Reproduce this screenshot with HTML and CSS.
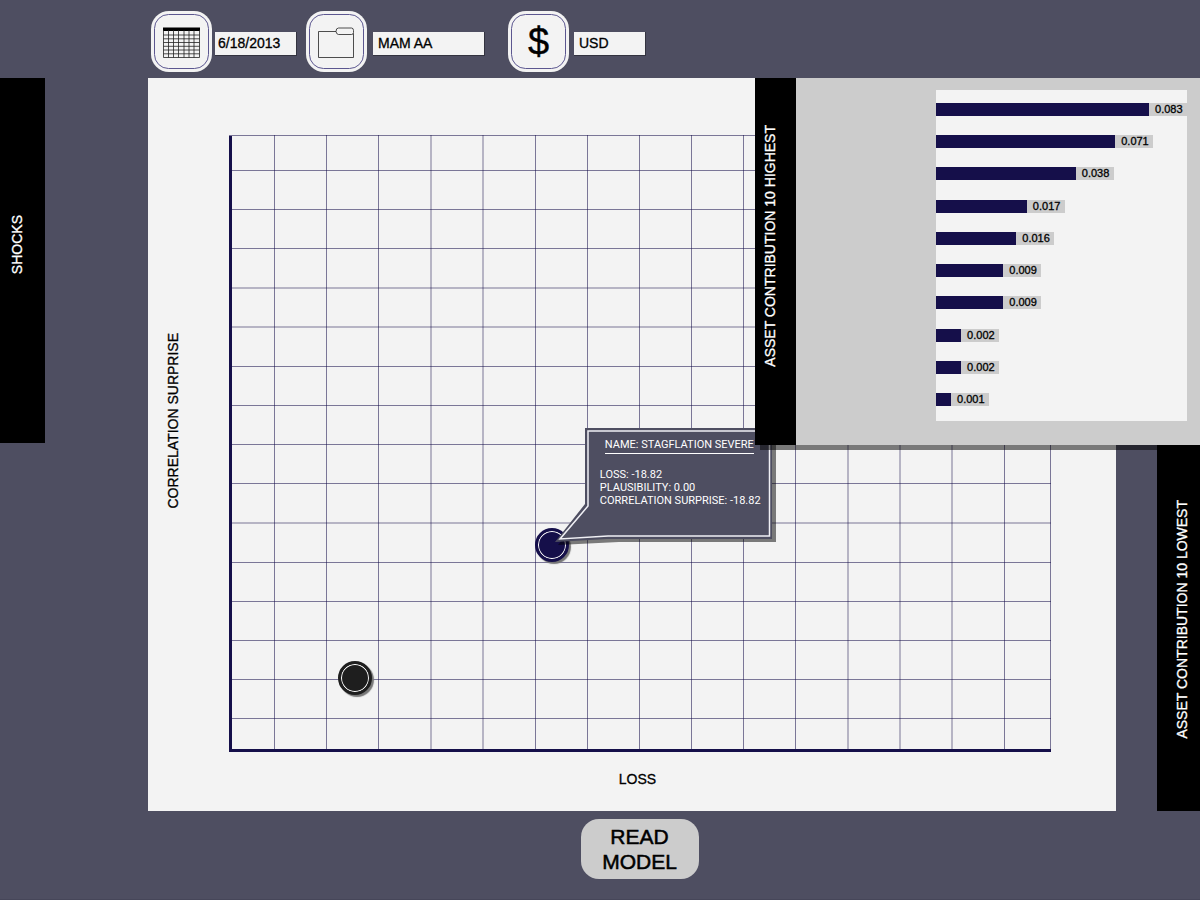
FILE: index.html
```html
<!DOCTYPE html>
<html lang="en">
<head>
<meta charset="utf-8">
<meta name="viewport" content="width=device-width, initial-scale=1">
<title>Scenario model</title>
<link rel="stylesheet" href="styles.css">
</head>
<body>
<header class="toolbar">
  <div class="field">
    <button class="icon-button" type="button" aria-label="Choose date">
      <svg viewBox="0 0 61 61" aria-hidden="true">
        <rect class="outline" x="3.5" y="3.5" width="54" height="54" rx="14"/>
        <path d="M12 16.500h37v3.500h-37z"/>
        <path class="thin" d="M12.500 19v27.500M17.500 19v27.500M22.500 19v27.500M27.500 19v27.500M33 19v27.500M38 19v27.500M43 19v27.500M48.500 19v27.500M12.500 24h36M12.500 27.800h36M12.500 31.500h36M12.500 35.300h36M12.500 39h36M12.500 42.800h36M12.500 46.500h36"/>
      </svg>
    </button>
    <input class="value value-date" type="text" aria-label="Date" value="6/18/2013">
  </div>
  <div class="field field-portfolio">
    <button class="icon-button" type="button" aria-label="Choose portfolio">
      <svg viewBox="0 0 61 61" aria-hidden="true">
        <rect class="outline" x="3.500" y="3.500" width="54" height="54" rx="14"/>
        <path class="thin" d="M30 20.500H12.500V46.500H47.500V22.500M32.500 17H45.500Q47.500 17 47.500 19.500V21.500Q47.500 23.500 45.500 23.500H32.500Q30.500 23.500 30 20.500Q30 17 32.500 17Z"/>
      </svg>
    </button>
    <input class="value value-portfolio" type="text" aria-label="Portfolio" value="MAM AA">
  </div>
  <div class="field field-currency">
    <button class="icon-button" type="button" aria-label="Choose currency">
      <svg viewBox="0 0 61 61" aria-hidden="true">
        <rect class="outline" x="3.500" y="3.500" width="54" height="54" rx="14"/>
        <text class="dollar" x="30.500" y="44" text-anchor="middle">$</text>
      </svg>
    </button>
    <input class="value value-currency" type="text" aria-label="Currency" value="USD">
  </div>
</header>

<main class="workspace">
  <button class="side-tab tab-shocks" type="button"><span class="vertical">SHOCKS</span></button>

  <section class="chart" aria-label="Correlation surprise by loss">
    <div class="axis-y"><span class="vertical">CORRELATION SURPRISE</span></div>
    <div class="plot">
      <svg class="grid" viewBox="0 0 822 616" aria-hidden="true">
        <path class="grid-lines" d="M45.500 0V616M97.500 0V616M149.500 0V616M202 0V616M254 0V616M306.500 0V616M358.500 0V616M410.500 0V616M462.500 0V616M514.500 0V616M566.500 0V616M619 0V616M671 0V616M723 0V616M775.500 0V616M821.500 0V616M0 .5H822M0 35.500H822M0 74.500H822M0 113.500H822M0 153H822M0 192H822M0 231.500H822M0 270.500H822M0 309.500H822M0 348.500H822M0 388H822M0 427.500H822M0 466.500H822M0 505.500H822M0 544.500H822M0 583.500H822"/>
        <path class="axes" d="M1.500 1V615.500H822"/>
      </svg>
      <button class="point point-dark" type="button" aria-label="Scenario"></button>
      <button class="point point-blue" type="button" aria-label="Stagflation severe"></button>
      <div class="callout">
        <svg class="callout-shape" viewBox="0 0 224 116" aria-hidden="true">
          <path class="callout-shadow" d="M36 4H223V114H66L5 117L36 80Z"/>
          <path class="callout-body" d="M32 0H219V111H54L2 114L32 76Z"/>
          <path class="callout-line" d="M35 3H216.500V108H55L7 111L35 78Z"/>
        </svg>
        <div class="callout-text">
          <h2 class="callout-title">NAME: STAGFLATION SEVERE</h2>
          <p>LOSS: -18.82</p>
          <p>PLAUSIBILITY: 0.00</p>
          <p>CORRELATION SURPRISE: -18.82</p>
        </div>
      </div>
    </div>
    <div class="axis-x">LOSS</div>
  </section>

  <button class="side-tab tab-lowest" type="button"><span class="vertical">ASSET CONTRIBUTION 10 LOWEST</span></button>

  <section class="drawer" aria-label="Asset contribution 10 highest">
    <button class="side-tab tab-highest" type="button"><span class="vertical">ASSET CONTRIBUTION 10 HIGHEST</span></button>
    <div class="drawer-body">
      <ul class="bars">
        <li class="row"><span class="bar" style="width:85%"></span><span class="amount">0.083</span></li>
        <li class="row"><span class="bar" style="width:71.4%"></span><span class="amount">0.071</span></li>
        <li class="row"><span class="bar" style="width:55.7%"></span><span class="amount">0.038</span></li>
        <li class="row"><span class="bar" style="width:36.2%"></span><span class="amount">0.017</span></li>
        <li class="row"><span class="bar" style="width:32%"></span><span class="amount">0.016</span></li>
        <li class="row"><span class="bar" style="width:26.8%"></span><span class="amount">0.009</span></li>
        <li class="row"><span class="bar" style="width:26.8%"></span><span class="amount">0.009</span></li>
        <li class="row"><span class="bar" style="width:10%"></span><span class="amount">0.002</span></li>
        <li class="row"><span class="bar" style="width:10%"></span><span class="amount">0.002</span></li>
        <li class="row"><span class="bar" style="width:6%"></span><span class="amount">0.001</span></li>
      </ul>
    </div>
  </section>
</main>

<footer class="actions">
  <button class="read-model" type="button">READ<br>MODEL</button>
</footer>
</body>
</html>
```

FILE: styles.css
```css
:root {
  --slate: #4e4e61;
  --paper: #f3f3f3;
  --silver: #cccccc;
  --navy: #150f4a;
}

* { box-sizing: border-box; }

body {
  margin: 0;
  min-height: 100vh;
  display: flex;
  flex-direction: column;
  background: var(--slate);
  border-bottom: 1px solid #464659;
  color: #000;
  font-family: "Liberation Sans", Arial, sans-serif;
  font-size: 14px;
  overflow-x: hidden;
}

button, input {
  font: inherit;
  color: inherit;
  border: 0;
  border-radius: 0;
  padding: 0;
}

button { cursor: pointer; }

/* Toolbar */
.toolbar {
  display: flex;
  align-items: center;
  padding: 11px 0 6px 151px;
}

.field {
  display: flex;
  align-items: center;
  gap: 3px;
}

.field-portfolio { margin-left: 9px; gap: 6px; }
.field-currency { margin-left: 23px; gap: 5px; }

.icon-button {
  width: 61px;
  height: 61px;
  border-radius: 18px;
  background: var(--paper);
}

.icon-button svg { display: block; }
.outline { fill: none; stroke: #5c5790; }
.thin { fill: none; stroke: #222; stroke-width: 0.8; }
.dollar { font-size: 38px; stroke: #000; stroke-width: 0.4; }

.value {
  height: 24px;
  margin-top: 4px;
  padding: 0 3px 1px;
  background: var(--paper);
  border: solid #33333f;
  border-width: 0 1px 1px 0;
  -webkit-text-stroke: 0.3px currentColor;
}

.value-date { width: 82px; }
.value-portfolio { width: 112px; padding-left: 5px; }
.value-currency { width: 72px; padding-left: 5px; }

/* Workspace */
.workspace {
  position: relative;
  display: grid;
  grid-template-columns: 148px minmax(0, 1fr) 84px;
}

.side-tab {
  display: flex;
  align-items: center;
  justify-content: center;
  background: #000;
  color: #fff;
}

.vertical {
  writing-mode: vertical-rl;
  transform: rotate(180deg);
  white-space: nowrap;
  line-height: 18px;
  -webkit-text-stroke: 0.3px currentColor;
}

.tab-shocks {
  width: 45px;
  height: 365px;
  padding: 0 12px 32px 0;
}

.tab-lowest {
  width: 43px;
  height: 366px;
  padding: 0 0 18px 6px;
  align-self: end;
  justify-self: end;
}

.tab-highest {
  width: 41px;
  padding: 0 12px 32px 0;
}

/* Chart */
.chart {
  display: grid;
  grid-template-columns: 81px minmax(0, 1fr);
  padding: 57px 65px 0 0;
  background: var(--paper);
}

.axis-y {
  display: flex;
  align-items: center;
  padding: 0 0 44px 16px;
}

.axis-x {
  grid-column: 2;
  height: 60px;
  padding-right: 5px;
  line-height: 57px;
  text-align: center;
  -webkit-text-stroke: 0.3px currentColor;
}

.plot { position: relative; }
.grid { display: block; width: 100%; overflow: visible; }
.grid-lines { fill: none; stroke: var(--navy); stroke-opacity: 0.55; }
.axes { fill: none; stroke: var(--navy); stroke-width: 3; }

.point {
  position: absolute;
  width: 34px;
  height: 34px;
  transform: translate(-50%, -50%);
  border: 3px solid currentColor;
  border-radius: 50%;
  background: currentColor;
  box-shadow: inset 0 0 0 1px #fff, 2px 2px 1px #777;
}

.point-dark { left: 15.3%; top: 88.2%; color: #1e1e1e; }
.point-blue { left: 39.3%; top: 66.5%; color: var(--navy); }

.callout {
  position: absolute;
  left: 39.4%;
  top: 47.6%;
  width: 224px;
  height: 116px;
  color: #fff;
  font-family: Roboto, "Liberation Sans", sans-serif;
  font-size: 11px;
}

.callout-shape {
  position: absolute;
  inset: 0;
  overflow: visible;
}

.callout-shadow { fill: #000; fill-opacity: 0.5; }
.callout-body { fill: var(--slate); }
.callout-line { fill: none; stroke: #f0f0f5; stroke-width: 1.5; }

.callout-text {
  position: relative;
  padding: 10px 0 0 47px;
  white-space: nowrap;
  line-height: 13px;
}

.callout-text p { margin: 0; }

.callout-title {
  width: max-content;
  margin: 0 0 14px 5px;
  padding-bottom: 2px;
  border-bottom: 1px solid #fff;
  font-size: 11px;
  font-weight: 400;
}

/* Drawer */
.drawer {
  position: absolute;
  top: 0;
  right: 0;
  width: 445px;
  height: 367px;
  display: flex;
  background: var(--silver);
  box-shadow: 5px 5px 0 rgba(0, 0, 0, 0.5);
}

.drawer-body {
  flex: 1;
  display: flex;
  padding: 12px 13px 24px 140px;
}

.bars {
  flex: 1;
  min-width: 0;
  margin: 0;
  padding: 13px 0 15px;
  display: flex;
  flex-direction: column;
  justify-content: space-between;
  list-style: none;
  background: var(--paper);
}

.row { display: flex; height: 13px; }
.bar { background: var(--navy); }

.amount {
  width: 38px;
  padding-left: 6px;
  background: var(--silver);
  font-size: 11px;
  line-height: 13px;
  -webkit-text-stroke: 0.3px currentColor;
}

/* Footer */
.actions {
  display: flex;
  justify-content: center;
  padding: 8px 0 0 79px;
}

.read-model {
  width: 118px;
  height: 60px;
  border-radius: 18px;
  background: var(--silver);
  font-size: 21px;
  line-height: 25px;
  -webkit-text-stroke: 0.5px currentColor;
}
```
